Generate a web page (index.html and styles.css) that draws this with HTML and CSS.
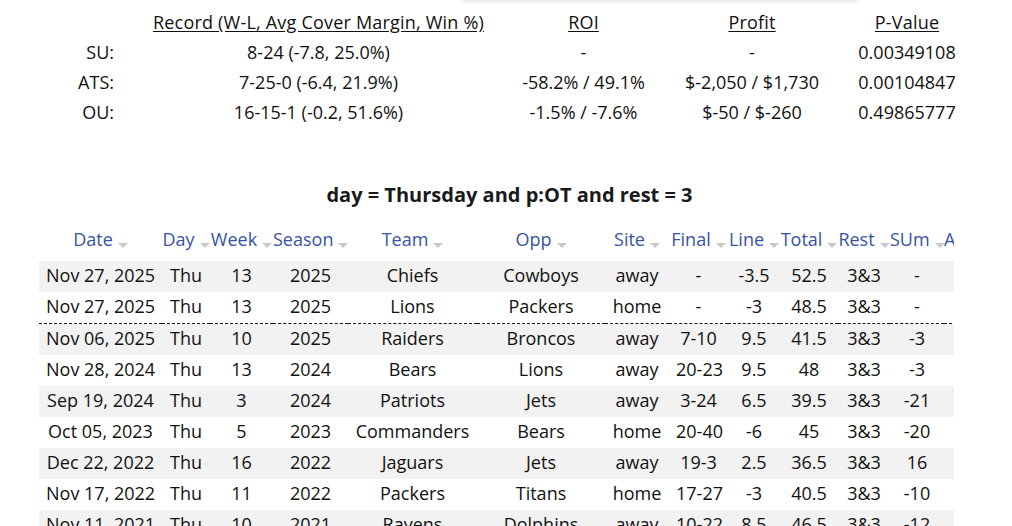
FILE: index.html
```html
<!DOCTYPE html>
<html lang="en">
<head>
<meta charset="utf-8">
<title>Trends</title>
<link rel="stylesheet" href="styles.css">
</head>
<body>
<div class="card-edge"></div>
<div class="summary">
  <div class="s-label"></div>
  <div class="s-head">Record (W-L, Avg Cover Margin, Win %)</div>
  <div class="s-head">ROI</div>
  <div class="s-head">Profit</div>
  <div class="s-head">P-Value</div>

  <div class="s-label">SU:</div>
  <div class="s-cell">8-24 (-7.8, 25.0%)</div>
  <div class="s-cell">-</div>
  <div class="s-cell">-</div>
  <div class="s-cell">0.00349108</div>

  <div class="s-label">ATS:</div>
  <div class="s-cell">7-25-0 (-6.4, 21.9%)</div>
  <div class="s-cell">-58.2% / 49.1%</div>
  <div class="s-cell">$-2,050 / $1,730</div>
  <div class="s-cell">0.00104847</div>

  <div class="s-label">OU:</div>
  <div class="s-cell">16-15-1 (-0.2, 51.6%)</div>
  <div class="s-cell">-1.5% / -7.6%</div>
  <div class="s-cell">$-50 / $-260</div>
  <div class="s-cell">0.49865777</div>
</div>

<section class="results">
  <h2 class="query">day = Thursday and p:OT and rest = 3</h2>
  <div class="table-wrap">
    <table class="games">
      <colgroup>
        <col class="c-date"><col class="c-day"><col class="c-week"><col class="c-season">
        <col class="c-team"><col class="c-opp"><col class="c-site"><col class="c-final">
        <col class="c-line"><col class="c-total"><col class="c-rest"><col class="c-sum">
        <col class="c-atsm">
      </colgroup>
      <thead>
        <tr>
          <th>Date<span class="caret"></span></th>
          <th>Day<span class="caret"></span></th>
          <th>Week<span class="caret"></span></th>
          <th>Season<span class="caret"></span></th>
          <th>Team<span class="caret"></span></th>
          <th>Opp<span class="caret"></span></th>
          <th>Site<span class="caret"></span></th>
          <th>Final<span class="caret"></span></th>
          <th>Line<span class="caret"></span></th>
          <th>Total<span class="caret"></span></th>
          <th>Rest<span class="caret"></span></th>
          <th>SUm<span class="caret"></span></th>
          <th class="h-atsm">ATSm<span class="caret"></span></th>
        </tr>
      </thead>
      <tbody>
        <tr class="upcoming"><td>Nov 27, 2025</td><td>Thu</td><td>13</td><td>2025</td><td>Chiefs</td><td>Cowboys</td><td>away</td><td>-</td><td>-3.5</td><td>52.5</td><td>3&amp;3</td><td>-</td><td></td></tr>
        <tr class="upcoming last"><td>Nov 27, 2025</td><td>Thu</td><td>13</td><td>2025</td><td>Lions</td><td>Packers</td><td>home</td><td>-</td><td>-3</td><td>48.5</td><td>3&amp;3</td><td>-</td><td></td></tr>
        <tr><td>Nov 06, 2025</td><td>Thu</td><td>10</td><td>2025</td><td>Raiders</td><td>Broncos</td><td>away</td><td>7-10</td><td>9.5</td><td>41.5</td><td>3&amp;3</td><td>-3</td><td></td></tr>
        <tr><td>Nov 28, 2024</td><td>Thu</td><td>13</td><td>2024</td><td>Bears</td><td>Lions</td><td>away</td><td>20-23</td><td>9.5</td><td>48</td><td>3&amp;3</td><td>-3</td><td></td></tr>
        <tr><td>Sep 19, 2024</td><td>Thu</td><td>3</td><td>2024</td><td>Patriots</td><td>Jets</td><td>away</td><td>3-24</td><td>6.5</td><td>39.5</td><td>3&amp;3</td><td>-21</td><td></td></tr>
        <tr><td>Oct 05, 2023</td><td>Thu</td><td>5</td><td>2023</td><td>Commanders</td><td>Bears</td><td>home</td><td>20-40</td><td>-6</td><td>45</td><td>3&amp;3</td><td>-20</td><td></td></tr>
        <tr><td>Dec 22, 2022</td><td>Thu</td><td>16</td><td>2022</td><td>Jaguars</td><td>Jets</td><td>away</td><td>19-3</td><td>2.5</td><td>36.5</td><td>3&amp;3</td><td>16</td><td></td></tr>
        <tr><td>Nov 17, 2022</td><td>Thu</td><td>11</td><td>2022</td><td>Packers</td><td>Titans</td><td>home</td><td>17-27</td><td>-3</td><td>40.5</td><td>3&amp;3</td><td>-10</td><td></td></tr>
        <tr><td>Nov 11, 2021</td><td>Thu</td><td>10</td><td>2021</td><td>Ravens</td><td>Dolphins</td><td>away</td><td>10-22</td><td>8.5</td><td>46.5</td><td>3&amp;3</td><td>-12</td><td></td></tr>
      </tbody>
    </table>
  </div>
</section>
</body>
</html>
```

FILE: styles.css
```css
* { box-sizing: border-box; }

html, body {
  margin: 0;
  padding: 0;
  background: #fff;
}

body {
  font-family: "Open Sans", "Noto Sans", sans-serif;
  font-size: 18px;
  color: #111;
  position: relative;
  overflow: hidden;
  height: 526px;
}

.card-edge {
  position: absolute;
  top: -40px;
  left: 460px;
  width: 400px;
  height: 40px;
  background: #fff;
  border-radius: 6px;
  box-shadow: 0 1px 5px rgba(0, 0, 0, 0.14);
}

.summary {
  display: grid;
  grid-template-columns: 120px 397px 133px 204px 106px;
  grid-auto-rows: 30px;
  align-items: center;
  padding-top: 7px;
}

.s-label {
  text-align: right;
  padding-right: 6px;
}

.s-head,
.s-cell {
  text-align: center;
  white-space: nowrap;
}

.s-head {
  text-decoration: underline;
  text-underline-offset: 2px;
  letter-spacing: 0.2px;
}

.results {
  padding: 0 32px 0 39px;
  margin-top: 54px;
}

.query {
  margin: 0;
  text-align: center;
  font-size: 20px;
  font-weight: 700;
  line-height: 27px;
  color: #1a1a1a;
}

.table-wrap {
  width: 915px;
  overflow: hidden;
  margin-top: 17px;
}

.games {
  table-layout: fixed;
  border-collapse: collapse;
  width: 968px;
}

.c-date { width: 123px; }
.c-day { width: 48px; }
.c-week { width: 63px; }
.c-season { width: 75px; }
.c-team { width: 129px; }
.c-opp { width: 128px; }
.c-site { width: 64px; }
.c-final { width: 59px; }
.c-line { width: 52px; }
.c-total { width: 58px; }
.c-rest { width: 52px; }
.c-sum { width: 54px; }
.c-atsm { width: 63px; }

.games th {
  font-weight: 400;
  color: #3653a6;
  padding: 2px 0 10px;
  line-height: 24px;
  white-space: nowrap;
  text-align: center;
}

.games th.h-atsm {
  text-align: left;
}

.caret {
  display: inline-block;
  width: 0;
  height: 0;
  margin-left: 5px;
  border-left: 5px solid transparent;
  border-right: 5px solid transparent;
  border-top: 5px solid #c9c9c9;
  vertical-align: -2px;
}

.games td {
  padding: 2px 7px 4px;
  line-height: 25px;
  text-align: center;
  white-space: nowrap;
  color: #111;
}

.games tbody tr:nth-child(odd) td {
  background: #f2f2f2;
}

.games tr.last td {
  border-bottom: 1px dashed #111;
}
```
